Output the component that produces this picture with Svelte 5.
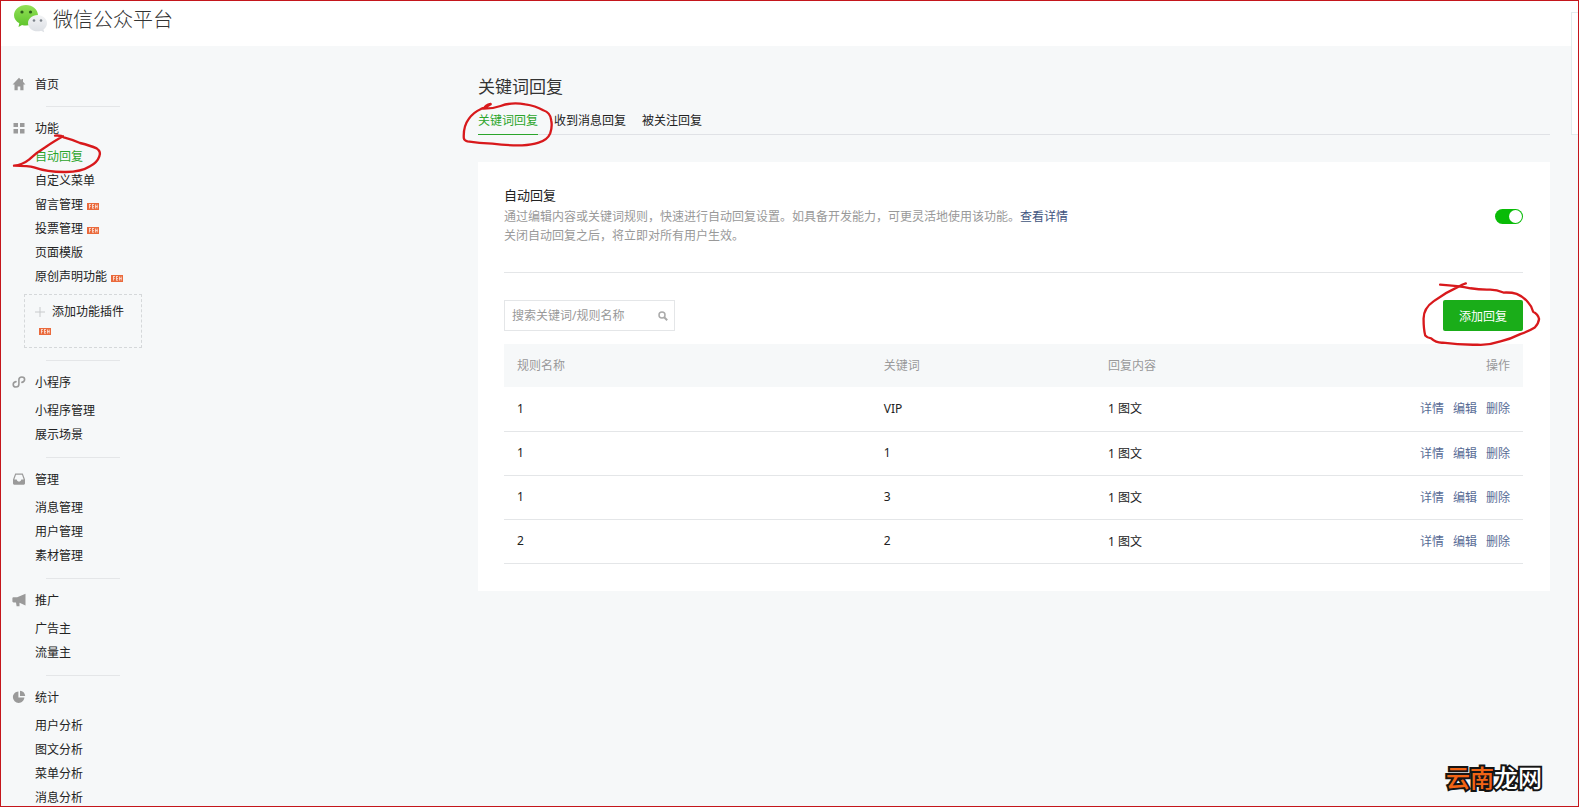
<script>
	const menu = [
		{ title: '首页', icon: 'home', items: [] },
		{
			title: '功能',
			icon: 'grid',
			plugin: true,
			items: [
				{ name: '自动回复', active: true },
				{ name: '自定义菜单' },
				{ name: '留言管理', badge: true },
				{ name: '投票管理', badge: true },
				{ name: '页面模版' },
				{ name: '原创声明功能', badge: true }
			]
		},
		{ title: '小程序', icon: 'mini', items: [{ name: '小程序管理' }, { name: '展示场景' }] },
		{ title: '管理', icon: 'inbox', items: [{ name: '消息管理' }, { name: '用户管理' }, { name: '素材管理' }] },
		{ title: '推广', icon: 'horn', items: [{ name: '广告主' }, { name: '流量主' }] },
		{
			title: '统计',
			icon: 'pie',
			items: [{ name: '用户分析' }, { name: '图文分析' }, { name: '菜单分析' }, { name: '消息分析' }]
		}
	];

	const tabs = ['关键词回复', '收到消息回复', '被关注回复'];

	const rules = [
		{ name: '1', keyword: 'VIP', content: '1 图文' },
		{ name: '1', keyword: '1', content: '1 图文' },
		{ name: '1', keyword: '3', content: '1 图文' },
		{ name: '2', keyword: '2', content: '1 图文' }
	];

	let currentTab = $state(0);
	let enabled = $state(true);
	let search = $state('');
</script>

{#snippet badge()}
	<svg class="badge" viewBox="0 0 12 7" aria-hidden="true">
		<rect width="12" height="7" fill="#ea6a3c" />
		<path d="M2.5 5.5v-4M2 1.5h2M2.5 3.5h1.2M5.5 5.5v-4M5 1.5h2M5.5 3.5H7M5.5 5.2H7M8.5 1.5v4M10.2 1.5v4M8.500 3.500h2" stroke="#fff" stroke-width=".8" opacity=".85" />
	</svg>
{/snippet}

{#snippet icon(name)}
	<svg class="icon" viewBox="0 0 14 14" fill="#9a9a9a" aria-hidden="true">
		{#if name === 'home'}
			<path d="M7 .8.6 7.4h1.900v5.800h3.200V9.400h2.600v3.800h3.200V7.400h1.900L11 4.800V2H9.400v1.200z" />
		{:else if name === 'grid'}
			<path d="M1.500 2h4.500v4H1.500zM8 2h4.500v4H8zM1.500 8h4.500v4.500H1.500zM8 8h4.500v4.500H8z" />
		{:else if name === 'mini'}
			<path d="M4 6.600C2.200 6.900 1.200 8 1.200 9.400c0 1.500 1.200 2.600 2.700 2.600 1.700 0 3-1.200 3-2.800V4.800c0-1.600 1.200-2.800 3-2.800 1.500 0 2.700 1 2.700 2.500 0 1.400-1 2.500-2.700 2.900" fill="none" stroke="#9a9a9a" stroke-width="1.600" stroke-linecap="round" />
		{:else if name === 'inbox'}
			<path fill-rule="evenodd" d="M3.200 1.500h7.600l2.200 6v3.800c0 .8-.5 1.400-1.200 1.400H2.200c-.7 0-1.200-.6-1.200-1.400V7.500zM4 2.700 2.300 7.500h2.400c.3 1.400 1.200 2 2.300 2s2-.6 2.300-2h2.400L10 2.700z" />
		{:else if name === 'horn'}
			<path d="M13.500.8v11.700L7.500 9.800v3.400H4.600L4 9.400H1.600C.8 9.400.4 9 .4 8.300V5.400c0-.7.4-1.100 1.200-1.100h3.600z" />
		{:else}
			<path d="M6.400 1.600v6h6c-.2 3-2.600 5.400-5.700 5.400A5.700 5.700 0 0 1 .9 7.300c0-3 2.400-5.500 5.500-5.700z" />
			<path d="M8 .8c2.900.2 5 2.300 5.200 5.200H8z" />
		{/if}
	</svg>
{/snippet}

<div class="page">
	<header>
		<svg class="logo" viewBox="0 0 34 28" aria-hidden="true">
			<defs>
				<linearGradient id="green" x2="0" y2="1">
					<stop offset="0" stop-color="#93e158" />
					<stop offset="1" stop-color="#5cc32a" />
				</linearGradient>
				<linearGradient id="gray" x2="0" y2="1">
					<stop offset="0" stop-color="#f3f4f6" />
					<stop offset="1" stop-color="#dcdfe4" />
				</linearGradient>
			</defs>
			<path d="M12 0c6.600 0 12 4.600 12 10.300S18.600 20.500 12 20.500c-1.400 0-2.800-.2-4-.6L4.500 22l.8-3.700C2 16.500 0 13.600 0 10.300 0 4.600 5.400 0 12 0z" fill="url(#green)" />
			<circle cx="8" cy="7" r="1.600" fill="#2d5f1c" />
			<circle cx="16.500" cy="7" r="1.600" fill="#2d5f1c" />
			<path d="M23.500 10c5.300 0 9.500 3.700 9.500 8.200 0 2.600-1.400 4.700-3.500 6.200l.7 2.800-3.100-1.500c-1.100.4-2.300.6-3.600.6-5.300 0-9.500-3.700-9.500-8.100s4.200-8.200 9.500-8.200z" fill="url(#gray)" />
			<circle cx="20" cy="15.500" r="1.300" fill="#7d838b" />
			<circle cx="27" cy="15.500" r="1.300" fill="#7d838b" />
		</svg>
		<span class="brand">微信公众平台</span>
	</header>

	<div class="body">
		<nav>
			{#each menu as group}
				<section>
					<h2>{@render icon(group.icon)}{group.title}</h2>
					{#if group.items.length}
						<ul>
							{#each group.items as item}
								<li>
									<a href="#top" class:active={item.active}>{item.name}</a>
									{#if item.badge}{@render badge()}{/if}
									{#if item.active}
										<svg class="mark mark-menu" viewBox="0 0 270 120" aria-hidden="true">
											<path d="M123 8Q140 6 152 14 175 20 198 30 230 38 248 46 262 56 256 70 250 88 228 100 200 118 150 117 100 117 60 103 45 98 0 98 25 96 45 80 65 60 95 42 125 22 147 10" />
										</svg>
									{/if}
								</li>
							{/each}
						</ul>
					{/if}
					{#if group.plugin}
						<a href="#top" class="plugin">
							<svg class="plus" viewBox="0 0 10 10" aria-hidden="true"><path d="M5 0v10M0 5h10" stroke="#c8cacc" /></svg>
							<span>添加功能插件</span>
							{@render badge()}
						</a>
					{/if}
				</section>
			{/each}
		</nav>

		<main>
			<h1>关键词回复</h1>
			<div class="tabs">
				{#each tabs as tab, i}
					<a href="#top" class:current={currentTab === i} onclick={() => (currentTab = i)}>{tab}</a>
				{/each}
				<svg class="mark mark-tab" viewBox="0 0 280 145" aria-hidden="true">
					<path d="M89 9q-16 3-20 14 28 0 50-8 32-12 75-5 30 4 54 18 22 7 24 30 4 20-3 40-8 20-35 28-20 7-50 8-40 1-90-5-40-2-75-7-10-3-11-10-2-35 15-58 14-20 37-30 14-4 29-14" />
				</svg>
			</div>

			<div class="card">
				<div class="intro">
					<div>
						<h3 id="auto-title">自动回复</h3>
						<p>通过编辑内容或关键词规则，快速进行自动回复设置。如具备开发能力，可更灵活地使用该功能。<a href="#top">查看详情</a></p>
						<p>关闭自动回复之后，将立即对所有用户生效。</p>
					</div>
					<input class="switch" type="checkbox" role="switch" aria-labelledby="auto-title" bind:checked={enabled} />
				</div>

				<div class="toolbar">
					<label class="search">
						<input type="text" placeholder="搜索关键词/规则名称" aria-label="搜索关键词/规则名称" bind:value={search} />
						<svg viewBox="0 0 10 10" aria-hidden="true">
							<circle cx="4" cy="4" r="3" fill="none" stroke="#aaa" stroke-width="1.500" />
							<path d="m6.200 6.200 3 3" stroke="#aaa" stroke-width="2" />
						</svg>
					</label>
					<div class="add">
						<button type="button">添加回复</button>
						<svg class="mark mark-add" viewBox="0 0 370 200" aria-hidden="true">
							<path d="M139 7q-12 3-22 10-40 18-75 44-32 22-31 55 0 30 5 49 6 7 18 9 15 14 35 13 50 7 105 6 35 2 70-10 30-7 60-22 25-8 44-20 12-13 13-26-3-15-18-22-5-18-15-28-15-18-35-26-15-5-40-4-20-9-40-9-30 1-60-4-35-7-92-11" />
						</svg>
					</div>
				</div>

				<table>
					<thead>
						<tr>
							<th class="col-name">规则名称</th>
							<th class="col-key">关键词</th>
							<th>回复内容</th>
							<th class="ops">操作</th>
						</tr>
					</thead>
					<tbody>
						{#each rules as rule}
							<tr>
								<td>{rule.name}</td>
								<td>{rule.keyword}</td>
								<td>{rule.content}</td>
								<td class="ops">
									<div>
										<a href="#top">详情</a>
										<a href="#top">编辑</a>
										<a href="#top">删除</a>
									</div>
								</td>
							</tr>
						{/each}
					</tbody>
				</table>
			</div>
		</main>
	</div>

	<aside class="side-panel"></aside>
	<div class="watermark"><span>云南</span>龙网</div>
</div>

<style>
	:global(body) {
		font-family: 'Noto Sans', 'Noto Sans CJK SC', sans-serif;
		font-size: 12px;
		color: #222;
	}

	.page {
		position: relative;
		box-sizing: border-box;
		height: 100vh;
		overflow: hidden;
		border: 1px solid #c4161c;
		background: #f6f8f9;
	}

	h1, h2, h3, p, ul {
		margin: 0;
		padding: 0;
		font-weight: 400;
	}

	ul {
		list-style: none;
	}

	a {
		color: inherit;
		text-decoration: none;
	}

	header {
		display: flex;
		gap: 5px;
		height: 45px;
		padding-left: 13px;
		background: #fff;
	}

	.logo {
		width: 34px;
		height: 28px;
		margin-top: 4px;
	}

	.brand {
		font-size: 20px;
		font-weight: 300;
		line-height: 37px;
		color: #333;
	}

	.body {
		display: flex;
		align-items: flex-start;
	}

	/* 左侧菜单 */
	nav {
		flex: none;
		width: 141px;
		padding-top: 22px;
	}

	section {
		padding-bottom: 11px;
	}

	section:first-child {
		padding-bottom: 6px;
	}

	section + section::before {
		content: '';
		display: block;
		width: 74px;
		margin: 0 0 5px 45px;
		border-top: 1px solid #e4e6e8;
	}

	h2 {
		display: flex;
		align-items: center;
		gap: 9px;
		height: 32px;
		padding-left: 11px;
		font-size: 12px;
	}

	.icon {
		width: 14px;
		height: 14px;
	}

	li {
		position: relative;
		display: flex;
		align-items: center;
		gap: 4px;
		height: 24px;
		padding-left: 34px;
	}

	li .active {
		color: #2ba52b;
	}

	.badge {
		width: 12px;
		height: 7px;
		margin-top: 4px;
	}

	.plugin {
		display: flex;
		flex-wrap: wrap;
		align-items: center;
		align-content: flex-start;
		column-gap: 7px;
		box-sizing: border-box;
		height: 54px;
		margin: 6px 0 12px 23px;
		padding: 6px 10px;
		border: 1px dashed #d5d8da;
		line-height: 22px;
	}

	section:has(.plugin) {
		padding-bottom: 0;
	}

	.plugin .badge {
		margin: 5px 4px;
	}

	.plus {
		width: 10px;
		height: 10px;
	}

	/* 主内容 */
	main {
		flex: 1;
		margin: 26px 28px 0 336px;
	}

	h1 {
		font-size: 17px;
		line-height: 30px;
		color: #333;
	}

	.tabs {
		position: relative;
		display: flex;
		gap: 16px;
		margin-bottom: 27px;
		border-bottom: 1px solid #e0e2e6;
	}

	.tabs a {
		height: 32px;
		margin-bottom: -1px;
		line-height: 38px;
	}

	.tabs .current {
		border-bottom: 1px solid #2ba52b;
		color: #2ba52b;
	}

	.card {
		padding: 23px 27px 27px 26px;
		background: #fff;
	}

	.intro {
		display: flex;
		align-items: center;
		justify-content: space-between;
		height: 87px;
		border-bottom: 1px solid #e4e6e8;
	}

	.intro > div {
		align-self: flex-start;
	}

	h3 {
		font-size: 13px;
		line-height: 20px;
	}

	p {
		line-height: 19px;
		color: #999;
	}

	h3 + p {
		margin-top: 2px;
	}

	.ops a {
		color: #576b95;
	}

	p a {
		color: #3f5480;
	}

	.switch {
		appearance: none;
		display: flex;
		width: 28px;
		height: 15px;
		margin: 0 0 24px;
		padding: 1px;
		box-sizing: border-box;
		border-radius: 8px;
		background: #ccc;
	}

	.switch::before {
		content: '';
		width: 13px;
		height: 13px;
		border-radius: 50%;
		background: #fff;
	}

	.switch:checked {
		justify-content: flex-end;
		background: #09bb07;
	}

	.toolbar {
		display: flex;
		justify-content: space-between;
		margin: 27px 0 13px;
	}

	.search {
		display: flex;
		align-items: center;
		box-sizing: border-box;
		width: 171px;
		height: 31px;
		padding: 0 6px 0 7px;
		border: 1px solid #e4e6e8;
	}

	.search input {
		flex: 1;
		min-width: 0;
		padding: 0;
		border: 0;
		outline: 0;
		font: inherit;
	}

	.search input::placeholder {
		color: #999;
	}

	.search svg {
		width: 10px;
		height: 10px;
	}

	.add {
		position: relative;
	}

	button {
		width: 80px;
		height: 31px;
		padding: 0;
		border: 0;
		border-radius: 2px;
		background: #1aad19;
		font: inherit;
		color: #fff;
	}

	table {
		width: 100%;
		border-collapse: collapse;
		table-layout: fixed;
	}

	th {
		box-sizing: border-box;
		height: 43px;
		padding: 0 13px 2px;
		background: #f6f8f9;
		font-weight: 400;
		text-align: left;
		color: #999;
	}

	td {
		box-sizing: border-box;
		height: 44px;
		padding: 0 13px 1px;
		border-bottom: 1px solid #e4e6e8;
	}

	.col-name {
		width: 36%;
	}

	.col-key {
		width: 22%;
	}

	.ops {
		text-align: right;
	}

	.ops div {
		display: flex;
		justify-content: flex-end;
		gap: 9px;
	}

	/* 手绘红圈 */
	.mark {
		position: absolute;
		overflow: visible;
		fill: none;
		stroke: #d8191c;
		stroke-width: 7;
		stroke-linecap: round;
		stroke-linejoin: round;
		pointer-events: none;
	}

	.mark-menu {
		top: -11px;
		left: 13px;
		width: 90px;
		height: 40px;
	}

	.mark-tab {
		top: -1px;
		left: -17px;
		width: 93px;
		height: 48px;
	}

	.mark-add {
		top: -19px;
		right: -20px;
		width: 124px;
		height: 66px;
	}

	.side-panel {
		position: absolute;
		top: 11px;
		right: 0;
		width: 6px;
		height: 121px;
		border: 1px solid #e3eced;
		border-right: 0;
		background: #fff;
	}

	.watermark {
		position: absolute;
		right: 36px;
		bottom: 10px;
		font-size: 24px;
		font-weight: 500;
		line-height: 36px;
		color: #fff;
		-webkit-text-stroke: 4px #151515;
		paint-order: stroke fill;
	}

	.watermark span {
		color: #f26415;
	}
</style>
